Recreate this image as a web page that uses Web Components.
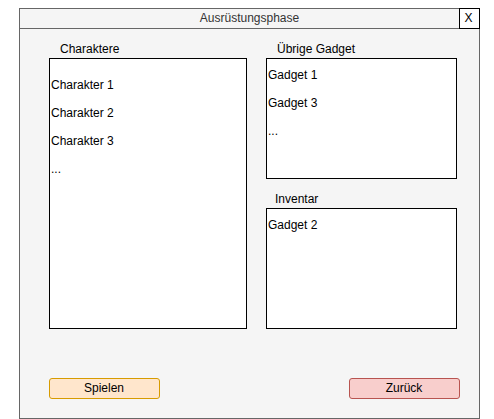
<!DOCTYPE html>
<html lang="de">
<head>
<meta charset="utf-8">
<meta name="viewport" content="width=device-width, initial-scale=1">
<title>Ausrüstungsphase</title>
<style>
  *, *::before { box-sizing: border-box; }
  body {
    margin: 0;
    min-height: 100vh;
    padding: 8px 14px 0 19px;
    display: flex;
    background: #fff;
    color: #000;
    font: 12px/14px "Liberation Sans", Arial, Helvetica, sans-serif;
  }
</style>
</head>
<body>
<app-window heading="Ausrüstungsphase">
  <list-panel label="Charaktere" class="roomy">
    <li>Charakter 1</li>
    <li>Charakter 2</li>
    <li>Charakter 3</li>
    <li>...</li>
  </list-panel>
  <panel-stack>
    <list-panel label="Übrige Gadget">
      <li>Gadget 1</li>
      <li>Gadget 3</li>
      <li>...</li>
    </list-panel>
    <list-panel label="Inventar" class="near">
      <li>Gadget 2</li>
    </list-panel>
  </panel-stack>
  <action-button slot="actions" kind="play">Spielen</action-button>
  <action-button slot="actions" kind="back">Zurück</action-button>
</app-window>

<template id="app-window">
  <style>
    * { box-sizing: border-box; }
    :host {
      flex: 1;
      min-width: 0;
      display: flex;
      flex-direction: column;
      box-sizing: border-box;
      border: 1px solid #666;
      background: #f5f5f5;
    }
    header {
      display: grid;
      grid-template-columns: 19px 1fr 19px;
      border-bottom: 1px solid #666;
    }
    h1 {
      grid-column: 2;
      margin: 0;
      padding: 2px 0 3px;
      font: inherit;
      text-align: center;
      color: #333;
    }
    .close {
      margin: -1px;
      padding: 0 2px 2px 0;
      border: 1px solid #000;
      background: #fff;
      color: #000;
      font: inherit;
    }
    main {
      flex: 1;
      display: grid;
      grid-template-columns: 198fr 191fr;
      column-gap: 19px;
      padding: 13px 22px 49px 29px;
    }
    footer {
      display: flex;
      justify-content: space-between;
      padding: 0 19px 19px 29px;
    }
  </style>
  <header>
    <h1></h1>
    <button class="close" type="button">X</button>
  </header>
  <main><slot></slot></main>
  <footer><slot name="actions"></slot></footer>
</template>

<template id="panel-stack">
  <style>
    :host {
      display: grid;
      grid-template-rows: 1fr 1fr;
      row-gap: 13px;
      min-width: 0;
    }
  </style>
  <slot></slot>
</template>

<template id="list-panel">
  <style>
    * { box-sizing: border-box; }
    :host {
      --indent: 11px;
      --top: 9px;
      display: flex;
      flex-direction: column;
      min-width: 0;
    }
    :host(.roomy) { --top: 19px; }
    :host(.near) { --indent: 9px; }
    h2 {
      margin: 0;
      padding: 0 0 2px var(--indent);
      font: inherit;
    }
    ul {
      flex: 1;
      display: flex;
      flex-direction: column;
      gap: 14px;
      margin: 0;
      padding: var(--top) 1px;
      border: 1px solid #000;
      background: #fff;
      list-style: none;
    }
  </style>
  <h2 id="label"></h2>
  <ul aria-labelledby="label"><slot></slot></ul>
</template>

<template id="action-button">
  <style>
    :host { display: block; }
    :host([kind="play"]) { --fill: #ffe6cc; --line: #d79b00; }
    :host([kind="back"]) { --fill: #f8cecc; --line: #b85450; }
    button {
      display: block;
      box-sizing: border-box;
      width: 111px;
      padding: 2px 1px 3px 0;
      border: 1px solid var(--line);
      border-radius: 3px;
      background: var(--fill);
      color: #000;
      font: inherit;
    }
  </style>
  <button type="button"><slot></slot></button>
</template>

<script>
  class TemplateElement extends HTMLElement {
    constructor() {
      super();
      const template = document.getElementById(this.localName);
      this.attachShadow({ mode: "open" }).append(template.content.cloneNode(true));
    }
  }

  class AppWindow extends TemplateElement {
    connectedCallback() {
      this.shadowRoot.querySelector("h1").textContent = this.getAttribute("heading");
    }
  }

  class ListPanel extends TemplateElement {
    connectedCallback() {
      this.shadowRoot.querySelector("h2").textContent = this.getAttribute("label");
    }
  }

  customElements.define("app-window", AppWindow);
  customElements.define("panel-stack", class extends TemplateElement {});
  customElements.define("list-panel", ListPanel);
  customElements.define("action-button", class extends TemplateElement {});
</script>
</body>
</html>
